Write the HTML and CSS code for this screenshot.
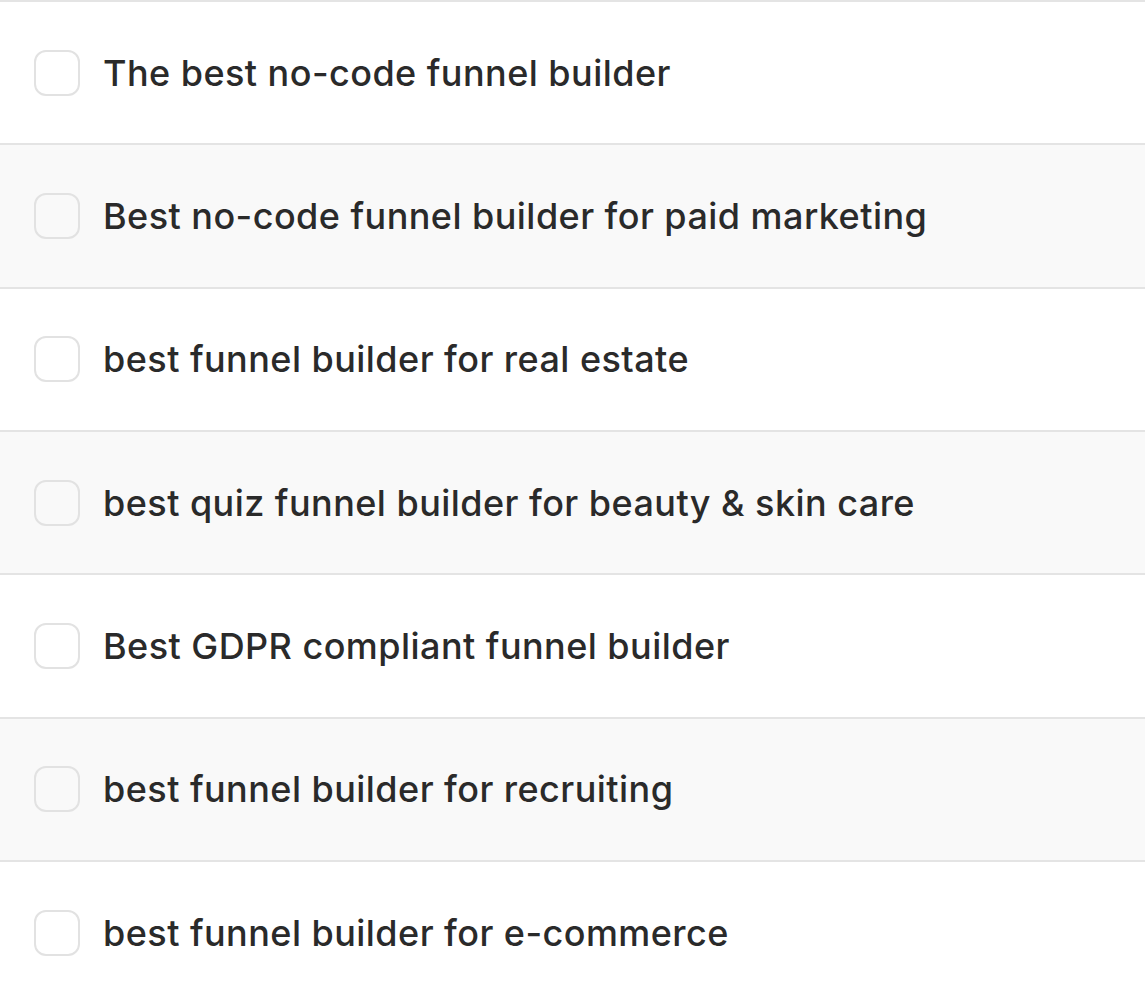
FILE: index.html
```html
<!DOCTYPE html>
<html lang="en">
<head>
<meta charset="utf-8">
<title>Funnel keywords</title>
<link rel="stylesheet" href="styles.css">
</head>
<body>
<ul class="list">
  <li class="row"><span class="box"></span><span class="label">The best no-code funnel builder</span></li>
  <li class="row alt"><span class="box"></span><span class="label">Best no-code funnel builder for paid marketing</span></li>
  <li class="row"><span class="box"></span><span class="label">best funnel builder for real estate</span></li>
  <li class="row alt"><span class="box"></span><span class="label">best quiz funnel builder for beauty &amp; skin care</span></li>
  <li class="row"><span class="box"></span><span class="label">Best GDPR compliant funnel builder</span></li>
  <li class="row alt"><span class="box"></span><span class="label">best funnel builder for recruiting</span></li>
  <li class="row"><span class="box"></span><span class="label">best funnel builder for e-commerce</span></li>
</ul>
</body>
</html>
```
FILE: styles.css
```css
html, body {
  margin: 0;
  padding: 0;
  background: #ffffff;
}
body {
  font-family: Inter, "Noto Sans", "Liberation Sans", sans-serif;
  color: #2a2a2a;
  overflow: hidden;
}
.list {
  list-style: none;
  margin: 0;
  padding: 0;
  border-top: 2px solid #e4e4e4;
}
.row {
  display: flex;
  align-items: center;
  gap: 23px;
  height: 141.33px;
  padding-left: 34px;
  border-bottom: 2px solid #e4e4e4;
  background: #ffffff;
}
.row.alt {
  background: #f9f9f9;
}
.box {
  flex: none;
  box-sizing: border-box;
  width: 46px;
  height: 46px;
  border: 2px solid #e2e2e2;
  border-radius: 12px;
  background: #ffffff;
}
.row.alt .box {
  background: #f9f9f9;
}
.label {
  font-size: 36px;
  font-weight: 500;
  letter-spacing: 0.45px;
}
```
